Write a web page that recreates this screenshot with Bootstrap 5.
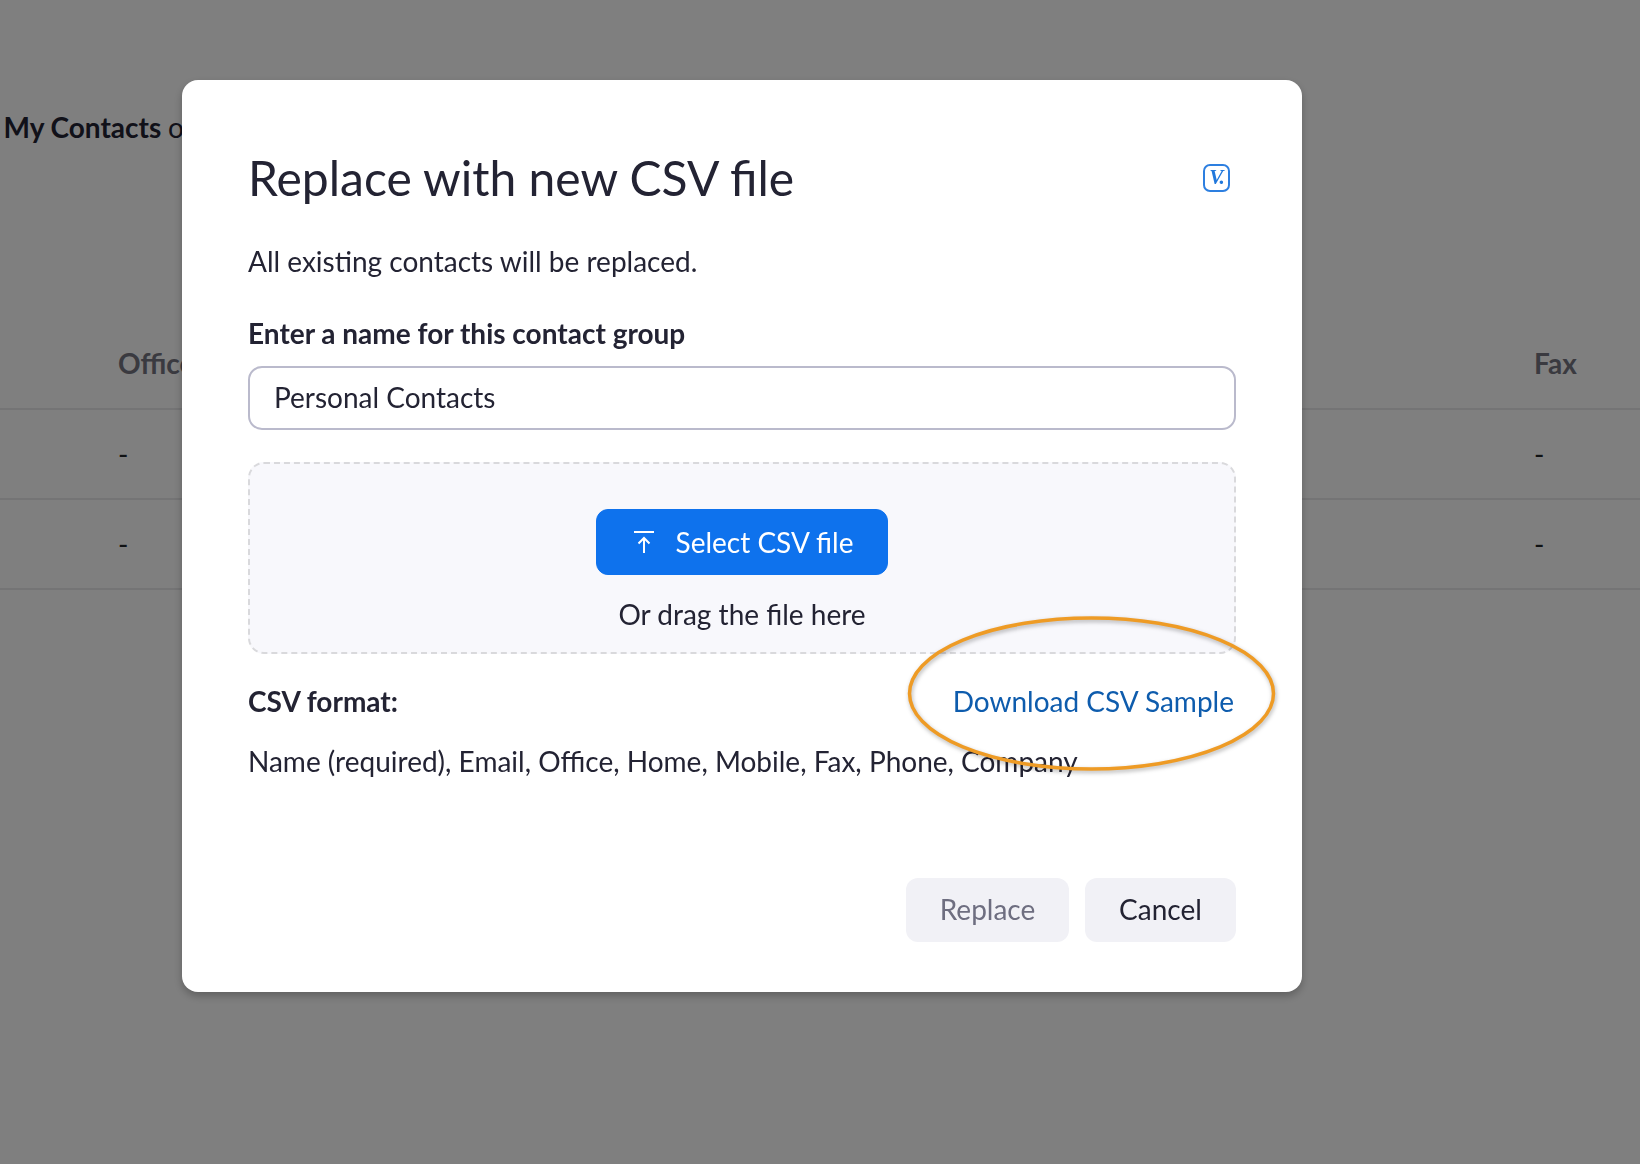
<!DOCTYPE html>
<html lang="en">
<head>
  <meta charset="UTF-8">
  <meta name="viewport" content="width=device-width, initial-scale=1.0">
  <title>Replace with new CSV file</title>
  <link href="https://cdn.jsdelivr.net/npm/bootstrap@5.3.0/dist/css/bootstrap.min.css" rel="stylesheet">
  <style>
    body {
      font-family: Lato, "Open Sans", sans-serif;
      color: #232333;
      background: #fff;
      font-size: 28px;
      overflow: hidden;
    }
    /* page behind the dialog */
    .page-title {
      font-size: 28px;
      font-weight: 700;
      line-height: 36px;
      padding: 109px 0 0 3.500px;
      margin: 0 0 172px;
      white-space: nowrap;
    }
    .page-title span { font-weight: 400; }
    .contact-table { table-layout: fixed; width: 100%; --bs-table-bg: transparent; margin: 0; }
    .contact-table th, .contact-table td {
      padding: 0;
      vertical-align: middle;
      border-color: #e8e8ea;
      border-bottom-width: 2px;
    }
    .contact-table tr { height: 90px; }
    .contact-table th { color: #747480; font-size: 28px; font-weight: 700; height: 92px; }
    .col-gap { width: 118px; }
    .col-office { width: 1416px; }

    /* dialog */
    .csv-dialog { max-width: none !important; width: 1120px; margin: 80px 0 0 182px !important; }
    .csv-content {
      border: 0;
      border-radius: 16px;
      padding: 70px 66px 50px 66px;
      box-shadow: 0 4px 8px rgba(0, 0, 0, .25);
      color: #232333;
    }
    .csv-heading { font-size: 48px; font-weight: 400; line-height: 56px; margin: 0; }
    .v-badge {
      width: 27px;
      height: 28px;
      margin: 0 6px 1px 0;
      border: 2px solid #2d7fe0;
      border-radius: 7px;
      color: #2178dc;
      font: italic 700 21px/22px "Liberation Serif", serif;
      letter-spacing: -1px;
      text-align: center;
    }
    .body-line { line-height: 36px; margin: 0; }
    .intro-line { margin-top: 37px; }
    .name-label { font-weight: 700; line-height: 36px; margin: 36px 0 15px; display: block; }
    .name-input {
      height: 64px;
      border: 2px solid #babacc;
      border-radius: 14px;
      padding: 0 24px 2px;
      font-size: 28px;
      color: #232333;
    }
    .drop-zone {
      margin-top: 32px;
      height: 192px;
      padding-top: 45px;
      border: 2px dashed #d9d9dc;
      border-radius: 16px;
      background: #f8f8fc;
    }
    .select-btn {
      width: 292px;
      height: 66px;
      padding: 0 0 0 3px;
      font-size: 28px;
      font-weight: 400;
      line-height: 36px;
      border-radius: 12px;
      --bs-btn-bg: #0e72ed;
      --bs-btn-border-color: #0e72ed;
      --bs-btn-hover-bg: #0e72ed;
      --bs-btn-color: #fff;
      gap: 22px;
    }
    .drag-hint { margin-top: 21px; }
    .format-row { margin-top: 29px; line-height: 36px; }
    .format-row strong { font-weight: 700; }
    .sample-link { color: #0e5cad; text-decoration: none; margin-right: 2px; }
    .format-list { margin-top: 24px; }
    .foot-row { margin-top: 99px; }
    .foot-btn {
      height: 64px;
      font-size: 28px;
      line-height: 36px;
      border-radius: 12px;
      padding: 0 0 2px;
      border: 0;
      --bs-btn-bg: #f1f1f6;
      --bs-btn-hover-bg: #f1f1f6;
      --bs-btn-color: #232333;
      --bs-btn-disabled-bg: #f1f1f6;
      --bs-btn-disabled-color: #6e6e80;
      --bs-btn-disabled-opacity: 1;
    }
    .foot-replace { width: 163px; }
    .foot-cancel { width: 151px; }
    .sample-ring {
      position: absolute;
      left: 722px;
      top: 533px;
      pointer-events: none;
      overflow: visible;
      filter: drop-shadow(1px 2px 2px rgba(0, 0, 0, .3));
    }
  </style>
</head>
<body>
  <!-- Page behind -->
  <h2 class="page-title">My Contacts <span>o</span></h2>
  <table class="table contact-table">
    <colgroup><col class="col-gap"><col class="col-office"><col></colgroup>
    <thead>
      <tr><th></th><th>Office</th><th>Fax</th></tr>
    </thead>
    <tbody>
      <tr><td></td><td>-</td><td>-</td></tr>
      <tr><td></td><td>-</td><td>-</td></tr>
    </tbody>
  </table>

  <div class="modal-backdrop show"></div>

  <!-- Dialog -->
  <div class="modal d-block">
    <div class="modal-dialog csv-dialog">
      <div class="modal-content csv-content">
        <div class="d-flex justify-content-between align-items-center">
          <h1 class="csv-heading">Replace with new CSV file</h1>
          <div class="v-badge">V.</div>
        </div>
        <p class="body-line intro-line">All existing contacts will be replaced.</p>
        <label class="name-label" for="groupName">Enter a name for this contact group</label>
        <input id="groupName" class="form-control name-input" type="text" value="Personal Contacts">

        <div class="drop-zone d-flex flex-column align-items-center">
          <button type="button" class="btn btn-primary select-btn d-flex align-items-center justify-content-center">
            <svg width="20" height="22" viewBox="0 0 20 22" fill="none" stroke="#fff" stroke-width="2">
              <path d="M0 1h20M10 22V7M4.500 12.500 10 7l5.500 5.500"/>
            </svg>
            <span>Select CSV file</span>
          </button>
          <div class="body-line drag-hint">Or drag the file here</div>
        </div>

        <div class="format-row d-flex justify-content-between">
          <strong>CSV format:</strong>
          <a class="sample-link" href="#">Download CSV Sample</a>
        </div>
        <p class="body-line format-list">Name (required), Email, Office, Home, Mobile, Fax, Phone, Company</p>

        <div class="foot-row d-flex justify-content-end gap-3">
          <button type="button" class="btn foot-btn foot-replace" disabled>Replace</button>
          <button type="button" class="btn foot-btn foot-cancel">Cancel</button>
        </div>

        <!-- hand-drawn highlight -->
        <svg class="sample-ring" width="376" height="160" viewBox="0 0 376 160" fill="none">
          <ellipse cx="187.500" cy="80.500" rx="182" ry="75.500" stroke="#ee9b25" stroke-width="3.500"/>
        </svg>
      </div>
    </div>
  </div>

  <script src="https://cdn.jsdelivr.net/npm/bootstrap@5.3.0/dist/js/bootstrap.bundle.min.js"></script>
</body>
</html>
